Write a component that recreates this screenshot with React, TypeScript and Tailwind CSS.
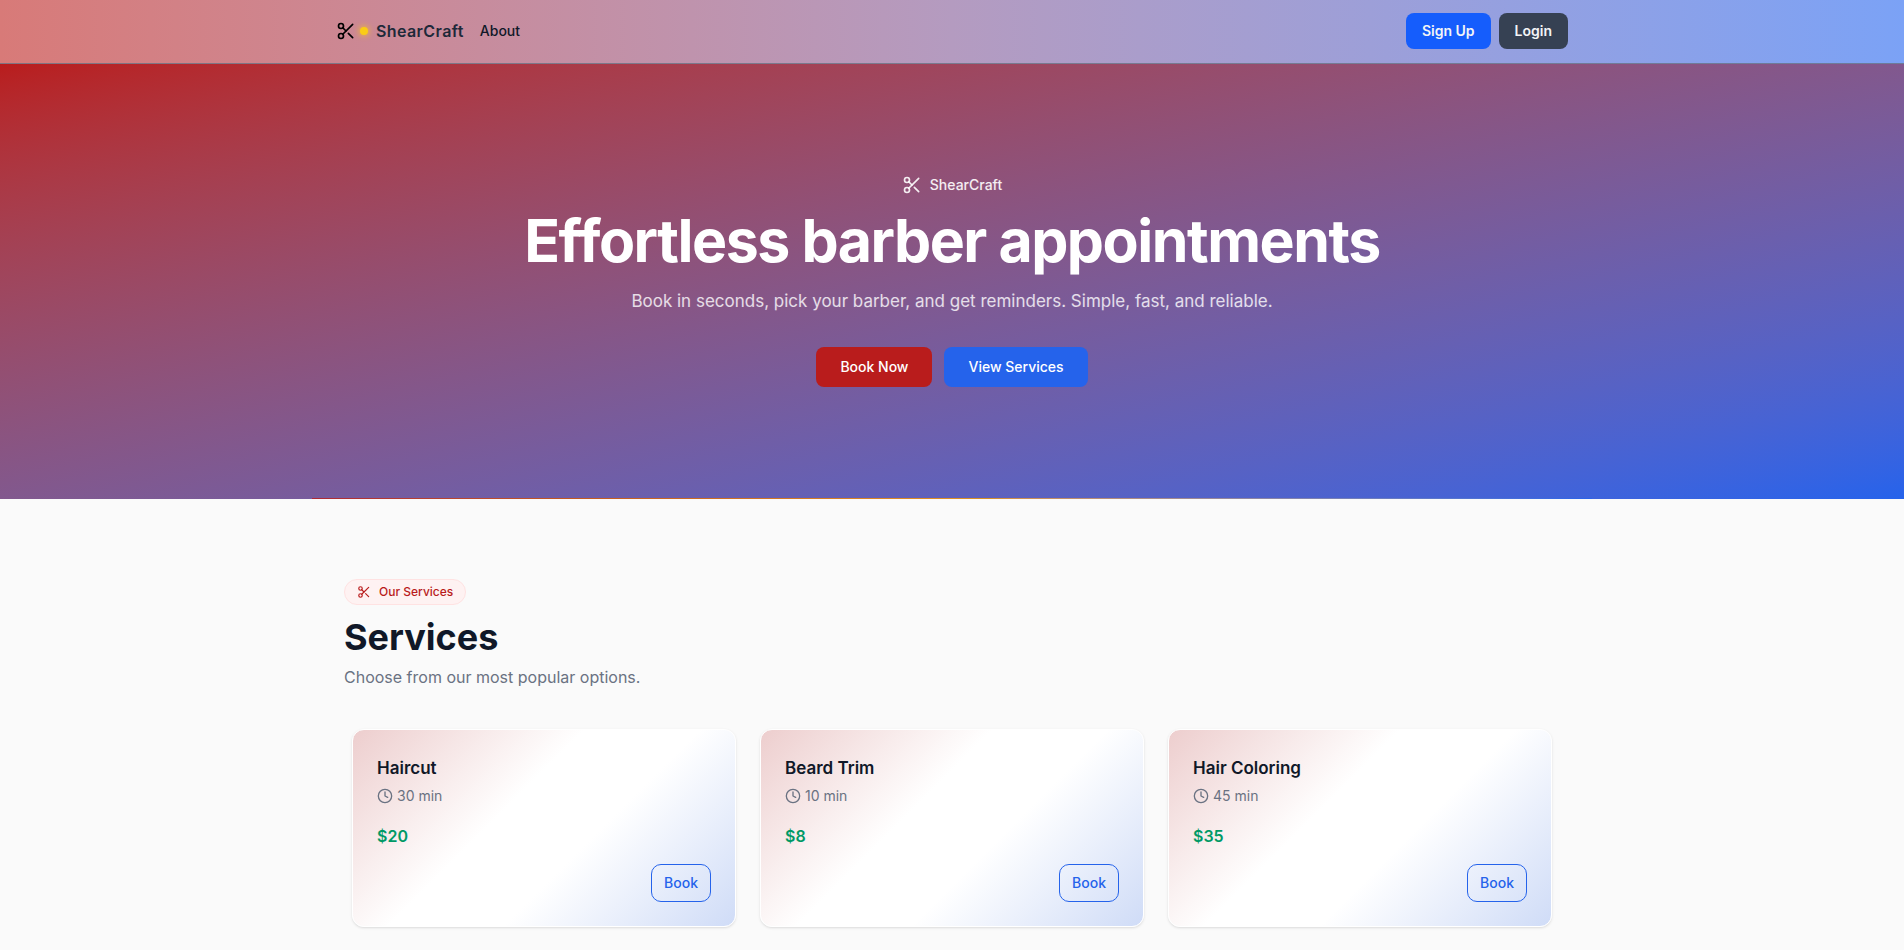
import { Clock, Scissors } from "lucide-react";

type Service = { name: string; minutes: number; price: number };

const services: Service[] = [
  { name: "Haircut", minutes: 30, price: 20 },
  { name: "Beard Trim", minutes: 10, price: 8 },
  { name: "Hair Coloring", minutes: 45, price: 35 },
];

function Header() {
  return (
    <header className="relative z-10 -mb-px h-16 border-b border-gray-500/80 bg-linear-to-r from-[#d87a78] via-[#b49bc0] to-[#7ba2f6]">
      <div className="mx-auto flex max-w-7xl items-center justify-between px-6 py-[13px]">
        <div className="flex items-center gap-4">
          <a href="#home" className="flex items-center gap-2 text-base font-semibold tracking-wide text-gray-800">
            <span className="flex items-center gap-1">
              <Scissors className="size-5 text-black" aria-hidden="true" />
              <span className="size-2 rounded-full bg-[#facc15] shadow-[0_0_6px_#facc15]" />
            </span>
            ShearCraft
          </a>
          <a href="#about" className="text-sm font-medium text-gray-900">About</a>
        </div>
        <div className="flex items-center gap-2">
          <button type="button" className="h-9 rounded-lg bg-[#155dfc] px-4 text-sm font-semibold text-gray-100">Sign Up</button>
          <button type="button" className="h-9 rounded-lg bg-[#364153] px-4 text-sm font-semibold text-gray-100">Login</button>
        </div>
      </div>
    </header>
  );
}

function Hero() {
  return (
    <section className="bg-linear-to-br from-[#b91c1c] to-[#2563eb]">
      <div className="mx-auto flex max-w-5xl flex-col items-center px-6 py-28 text-center">
        <div className="flex items-center gap-2 text-sm font-medium text-white/90">
          <Scissors className="size-5" aria-hidden="true" />
          ShearCraft
        </div>
        <h1 className="mt-4 text-[59px] leading-[60px] font-bold tracking-tight text-white">
          Effortless barber appointments
        </h1>
        <p className="mt-4 text-[17px] leading-7 text-white/80">
          Book in seconds, pick your barber, and get reminders. Simple, fast, and reliable.
        </p>
        <div className="mt-8 flex gap-3">
          <button type="button" className="h-10 rounded-lg bg-[#b91c1c] px-6 text-sm font-medium text-white">Book Now</button>
          <button type="button" className="h-10 rounded-lg bg-[#2563eb] px-6 text-sm font-medium text-white">View Services</button>
        </div>
      </div>
      <div className="mx-auto -mt-px h-px max-w-7xl bg-linear-to-r from-[#b91c1c] via-amber-500 to-[#2563eb] opacity-80" />
    </section>
  );
}

function ServiceCard({ name, minutes, price }: Service) {
  return (
    <article className="flex flex-col rounded-xl border border-white bg-[linear-gradient(135deg,#b91c1c33_0%,#ffffff_40%,#ffffff_60%,#2563eb33_100%)] p-6 shadow-sm">
      <h3 className="text-[17px] leading-7 font-semibold text-gray-900">{name}</h3>
      <p className="mt-1 flex items-center gap-1 text-sm text-gray-500">
        <Clock className="size-4" aria-hidden="true" />
        {minutes} min
      </p>
      <p className="mt-[18px] text-base font-semibold text-emerald-600">${price}</p>
      <button type="button" className="mt-4 h-[38px] self-end rounded-[10px] border border-[#2563eb] px-3 text-sm font-medium text-[#2563eb]">
        Book
      </button>
    </article>
  );
}

function Services() {
  return (
    <section className="mx-auto max-w-7xl px-8 py-20">
      <div className="flex w-fit items-center gap-2 rounded-full border border-red-100 bg-red-50 px-3 py-1 text-xs leading-4 font-medium text-[#b91c1c]">
        <Scissors className="size-3.5" aria-hidden="true" />
        Our Services
      </div>
      <h2 className="mt-3 text-4xl font-bold text-gray-900">Services</h2>
      <p className="mt-2 text-base text-gray-500">Choose from our most popular options.</p>
      <div className="mt-10 grid grid-cols-3 gap-6 px-2">
        {services.map((s) => (
          <ServiceCard key={s.name} {...s} />
        ))}
      </div>
    </section>
  );
}

export default function App() {
  return (
    <div className="min-h-screen bg-[#fafafa] font-['Inter',sans-serif]">
      <Header />
      <main>
        <Hero />
        <Services />
      </main>
    </div>
  );
}
